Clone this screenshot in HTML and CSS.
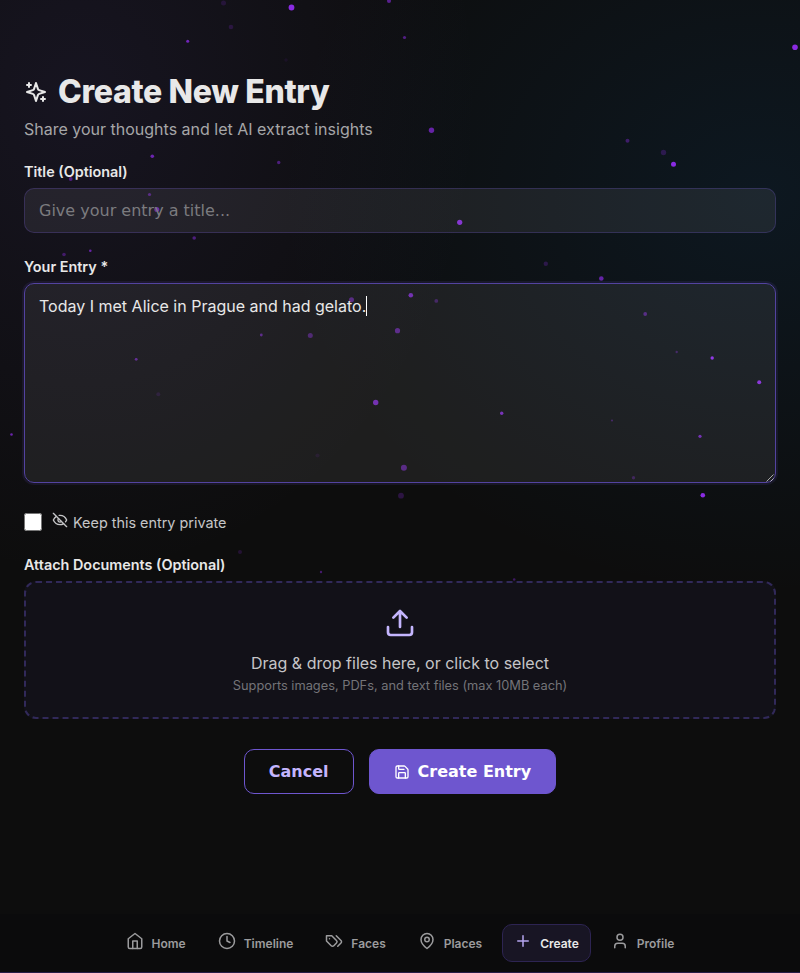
FILE: index.html
```html
<!DOCTYPE html>
<html lang="en">
<head>
<meta charset="utf-8">
<title>Create New Entry</title>
<link rel="stylesheet" href="styles.css">
</head>
<body>
<svg class="particles" viewBox="0 0 800 973" aria-hidden="true">
  <circle cx="291.500" cy="7.500" r="2.900" opacity="1"/><circle cx="389" cy="1" r="2" opacity=".6"/><circle cx="223.500" cy="3" r="2.500" opacity=".17"/><circle cx="231" cy="27" r="2.300" opacity=".2"/><circle cx="187.700" cy="41.300" r="1.500" opacity=".8"/><circle cx="404.500" cy="37.500" r="1.600" opacity=".55"/><circle cx="795" cy="47.300" r="2.800" opacity="1"/><circle cx="286" cy="60" r="1.800" opacity=".08"/>
  <circle cx="431.500" cy="130.200" r="2.700" opacity=".7"/><circle cx="627.500" cy="140.700" r="2" opacity=".4"/><circle cx="663.500" cy="152.500" r="2.700" opacity=".25"/><circle cx="673.500" cy="164.200" r="2.500" opacity="1"/><circle cx="152.300" cy="156.300" r="1.800" opacity=".75"/><circle cx="278.700" cy="162.500" r="1.700" opacity=".5"/><circle cx="70.700" cy="179" r="1.900" opacity=".5"/><circle cx="149.500" cy="194.500" r="1.600" opacity=".5"/><circle cx="156.800" cy="209.500" r="2.500" opacity=".65"/>
  <circle cx="459.700" cy="222.300" r="2.600" opacity=".9"/><circle cx="194.200" cy="238" r="1.800" opacity=".5"/><circle cx="90.300" cy="250.700" r="1.300" opacity=".7"/><circle cx="64" cy="254.500" r="1.800" opacity=".4"/><circle cx="545.800" cy="263.800" r="2.200" opacity=".25"/><circle cx="601.300" cy="278.500" r="2.300" opacity=".7"/><circle cx="351.500" cy="299.700" r="2.500" opacity=".5"/><circle cx="410.800" cy="295.300" r="2.300" opacity=".75"/><circle cx="436.300" cy="300.900" r="1.900" opacity=".35"/>
  <circle cx="645.200" cy="314" r="1.900" opacity=".5"/><circle cx="261.300" cy="335" r="1.400" opacity=".55"/><circle cx="310.300" cy="335.500" r="2.500" opacity=".42"/><circle cx="397.500" cy="330.700" r="2.600" opacity=".55"/><circle cx="676.700" cy="352" r="1.200" opacity=".35"/><circle cx="712.200" cy="358" r="1.700" opacity="1"/><circle cx="136.200" cy="359.300" r="1.400" opacity=".6"/><circle cx="158.300" cy="394.300" r="2" opacity=".14"/><circle cx="759.200" cy="382.300" r="2" opacity=".95"/><circle cx="375.700" cy="402.500" r="2.700" opacity=".75"/>
  <circle cx="501.700" cy="413.300" r="1.700" opacity=".78"/><circle cx="612" cy="420.500" r="1.100" opacity=".35"/><circle cx="700" cy="436.300" r="1.600" opacity=".75"/><circle cx="11.500" cy="434.500" r="1.300" opacity=".75"/><circle cx="317.500" cy="455.500" r="2.100" opacity=".1"/><circle cx="403.900" cy="467.700" r="3" opacity=".52"/><circle cx="633.500" cy="477.700" r="1.700" opacity=".3"/><circle cx="401" cy="495.700" r="2.900" opacity=".25"/><circle cx="702.800" cy="495.200" r="2.300" opacity="1"/><circle cx="240" cy="552" r="2" opacity=".18"/><circle cx="321" cy="572" r="1.200" opacity=".45"/><circle cx="514.200" cy="579.500" r="1.300" opacity=".4"/>
</svg>

<main class="page">
  <header class="page-header">
    <h1 class="page-title">
      <svg class="icon icon-24" viewBox="0 0 24 24"><path d="m12 3-1.912 5.813a2 2 0 0 1-1.275 1.275L3 12l5.813 1.912a2 2 0 0 1 1.275 1.275L12 21l1.912-5.813a2 2 0 0 1 1.275-1.275L21 12l-5.813-1.912a2 2 0 0 1-1.275-1.275L12 3Z"/><path d="M5 3v4M19 17v4M3 5h4M17 19h4"/></svg>
      <span>Create New Entry</span>
    </h1>
    <p class="page-subtitle">Share your thoughts and let AI extract insights</p>
  </header>

  <form class="form">
    <div class="group group-title">
      <label class="label" for="title">Title (Optional)</label>
      <input class="field" id="title" type="text" placeholder="Give your entry a title...">
    </div>

    <div class="group group-entry">
      <span class="label" id="entry-label">Your Entry *</span>
      <div class="field field-area" role="textbox" aria-multiline="true" aria-labelledby="entry-label">Today I met Alice in Prague and had gelato.<span class="caret"></span>
        <svg class="resizer" viewBox="0 0 8 8"><path d="M0.500 7.500 7.500 0.500M4.500 7.500 7.500 4.500"/></svg>
      </div>
    </div>

    <label class="private">
      <input class="checkbox" type="checkbox">
      <svg class="icon icon-16" viewBox="0 0 24 24"><path d="M9.880 9.880a3 3 0 1 0 4.240 4.240"/><path d="M10.730 5.080A10.430 10.430 0 0 1 12 5c7 0 10 7 10 7a13.160 13.160 0 0 1-1.670 2.680"/><path d="M6.610 6.610A13.526 13.526 0 0 0 2 12s3 7 10 7a9.740 9.740 0 0 0 5.390-1.610"/><path d="m2 2 20 20"/></svg>
      <span>Keep this entry private</span>
    </label>

    <div class="group group-files">
      <span class="label">Attach Documents (Optional)</span>
      <div class="dropzone">
        <svg class="icon icon-32" viewBox="0 0 24 24"><path d="M21 15v4a2 2 0 0 1-2 2H5a2 2 0 0 1-2-2v-4"/><path d="m17 8-5-5-5 5M12 3v12"/></svg>
        <p class="drop-text">Drag &amp; drop files here, or click to select</p>
        <p class="drop-hint">Supports images, PDFs, and text files (max 10MB each)</p>
      </div>
    </div>

    <div class="actions">
      <button class="btn btn-outline" type="button">Cancel</button>
      <button class="btn btn-primary" type="button">
        <svg class="icon icon-16" viewBox="0 0 24 24"><path d="M15.200 3a2 2 0 0 1 1.400.6l3.800 3.800a2 2 0 0 1 .6 1.400V19a2 2 0 0 1-2 2H5a2 2 0 0 1-2-2V5a2 2 0 0 1 2-2z"/><path d="M17 21v-7a1 1 0 0 0-1-1H8a1 1 0 0 0-1 1v7"/><path d="M7 3v4a1 1 0 0 0 1 1h7"/></svg>
        <span>Create Entry</span>
      </button>
    </div>
  </form>
</main>

<nav class="nav">
  <a class="nav-item"><svg class="icon icon-18" viewBox="0 0 24 24"><path d="m3 9 9-7 9 7v11a2 2 0 0 1-2 2H5a2 2 0 0 1-2-2z"/><path d="M9 22V12h6v10"/></svg><span>Home</span></a>
  <a class="nav-item"><svg class="icon icon-18" viewBox="0 0 24 24"><circle cx="12" cy="12" r="10"/><path d="M12 6v6l4 2"/></svg><span>Timeline</span></a>
  <a class="nav-item"><svg class="icon icon-18" viewBox="0 0 24 24"><path d="M9 5H2v7l6.290 6.290c.94.94 2.480.94 3.420 0l3.580-3.580c.94-.94.94-2.480 0-3.420L9 5Z"/><path d="M6 9.010V9"/><path d="m15 5 6.300 6.300a2.400 2.400 0 0 1 0 3.400L17 19"/></svg><span>Faces</span></a>
  <a class="nav-item"><svg class="icon icon-18" viewBox="0 0 24 24"><path d="M20 10c0 6-8 12-8 12s-8-6-8-12a8 8 0 0 1 16 0Z"/><circle cx="12" cy="10" r="3"/></svg><span>Places</span></a>
  <a class="nav-item active"><svg class="icon icon-18" viewBox="0 0 24 24"><path d="M5 12h14M12 5v14"/></svg><span>Create</span></a>
  <a class="nav-item"><svg class="icon icon-18" viewBox="0 0 24 24"><path d="M19 21v-2a4 4 0 0 0-4-4H9a4 4 0 0 0-4 4v2"/><circle cx="12" cy="7" r="4"/></svg><span>Profile</span></a>
</nav>
</body>
</html>
```
FILE: styles.css
```css
* { box-sizing: border-box; }

body {
  margin: 0;
  height: 973px;
  overflow: hidden;
  display: flex;
  flex-direction: column;
  font-family: Inter, sans-serif;
  font-size: 16px;
  color: #e8e8e8;
  background:
    radial-gradient(ellipse 400px 480px at 80px 97px, rgba(110, 86, 207, 0.1), transparent),
    radial-gradient(ellipse 480px 400px at 760px 195px, rgba(14, 110, 190, 0.11), transparent),
    #0d0d0d;
}

h1, p { margin: 0; }

.particles {
  position: absolute;
  inset: 0;
  width: 800px;
  height: 973px;
  z-index: -1;
  fill: #8a2be2;
}

.icon {
  flex: none;
  fill: none;
  stroke: currentColor;
  stroke-width: 2;
  stroke-linecap: round;
  stroke-linejoin: round;
}
.icon-16 { width: 16px; height: 16px; }
.icon-18 { width: 18px; height: 18px; }
.icon-24 { width: 24px; height: 24px; }
.icon-32 { width: 32px; height: 32px; }

.page {
  flex: 1;
  padding: 72px 24px 0;
}

.page-title {
  display: flex;
  align-items: center;
  gap: 10px;
  height: 39px;
  font-size: 32px;
  font-weight: 800;
  letter-spacing: -0.320px;
}
.page-subtitle {
  margin-top: 8px;
  line-height: 20px;
  color: #a6a6a8;
}

.form { display: flex; flex-direction: column; }
.group { display: flex; flex-direction: column; }
.group-title { margin-top: 24px; }
.group-entry { margin-top: 25px; }

.label {
  height: 17px;
  margin-bottom: 8px;
  font-size: 14.400px;
  line-height: 17px;
  font-weight: 600;
}

.field {
  width: 100%;
  height: 45px;
  padding: 0 14px;
  border: 1px solid rgba(110, 86, 207, 0.27);
  border-radius: 10px;
  background: rgba(255, 255, 255, 0.07);
  color: inherit;
  font-family: "DejaVu Sans", sans-serif;
  font-size: 16px;
  outline: none;
}
.field::placeholder { color: #7b7b7f; opacity: 1; }

.field-area {
  position: relative;
  height: 200px;
  padding: 12px 14px;
  border-color: #5343a0;
  box-shadow: 0 0 0 2px rgba(110, 86, 207, 0.12);
  font-family: Inter, sans-serif;
  line-height: 21px;
}
.caret {
  display: inline-block;
  width: 1px;
  height: 20px;
  vertical-align: top;
  background: #fff;
}
.resizer {
  position: absolute;
  right: 1px;
  bottom: 0;
  width: 8px;
  height: 8px;
  fill: none;
  stroke: #ccc;
  stroke-width: 0.800;
}

.private {
  display: flex;
  align-items: center;
  height: 20px;
  margin-top: 29px;
  font-size: 14.400px;
  color: #c5c5c7;
}
.private .icon { margin: 0 5px 4px 10px; }
.checkbox { width: 18px; height: 18px; margin: 0; }

.group-files { margin-top: 24px; }
.dropzone {
  display: flex;
  flex-direction: column;
  align-items: center;
  height: 138px;
  padding-top: 24px;
  border: 2px dashed #312959;
  border-radius: 12px;
  background: rgba(110, 86, 207, 0.06);
}
.dropzone .icon { color: #c4b5fd; }
.drop-text {
  margin-top: 14px;
  line-height: 20px;
  color: #c5c5c7;
}
.drop-hint {
  margin-top: 5px;
  font-size: 12.800px;
  line-height: 16px;
  color: #747478;
}

.actions {
  display: flex;
  justify-content: center;
  gap: 15px;
  margin-top: 30px;
}
.btn {
  display: flex;
  align-items: center;
  gap: 8px;
  height: 45px;
  padding: 0 24px;
  border: 1px solid #6e56cf;
  border-radius: 10px;
  font-family: "DejaVu Sans", sans-serif;
  font-size: 16px;
  font-weight: 600;
}
.btn-outline { background: transparent; color: #c4b5fd; }
.btn-primary { background: #6e56cf; color: #fff; }

.nav {
  display: flex;
  justify-content: center;
  gap: 7.200px;
  height: 59px;
  padding-top: 10px;
  border-bottom: 1px solid #261d47;
  background: #0b0b0c;
}
.nav-item {
  display: flex;
  align-items: center;
  gap: 8px;
  height: 38px;
  padding: 0 11.400px;
  border: 1px solid transparent;
  border-radius: 10px;
  font-size: 12px;
  font-weight: 600;
  color: #9b9b9d;
}
.nav-item .icon { margin-bottom: 4px; }
.nav-item.active {
  border-color: #2d2452;
  background: #181524;
  color: #e8e8e8;
}
.nav-item.active .icon { color: #b5a5f0; }
```
